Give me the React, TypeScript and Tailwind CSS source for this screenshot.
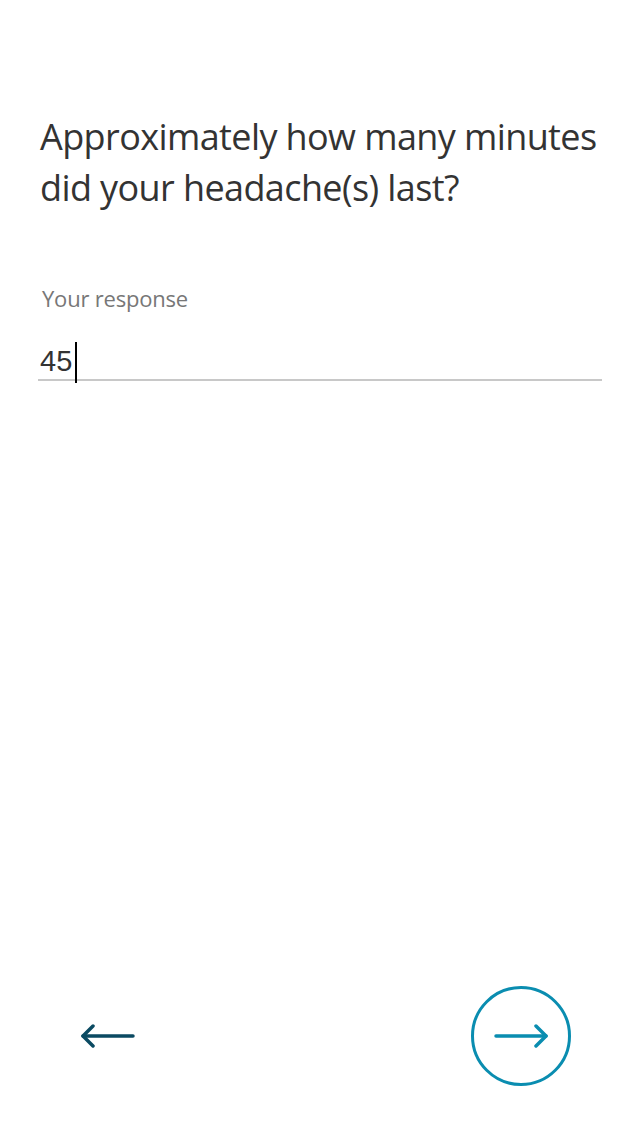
import React from "react";

export default function App() {
  return (
    <div className="w-[640px] h-[1136px] bg-white flex flex-col relative" style={{ fontFamily: '"Open Sans", "Noto Sans", sans-serif' }}>
      <div className="pt-[111px] pl-[40px] pr-[20px]">
        <h1 className="text-[36px] leading-[51px] text-[#333333] font-normal tracking-[-0.6px]">
          Approximately how many minutes did your headache(s) last?
        </h1>
      </div>
      <div className="pt-[71px] pl-[42px] text-[22px] leading-[28px] text-[#777777] tracking-[-0.2px]">Your response</div>
      <div className="mt-[28px] mx-[38px] border-b-2 border-[#c8c8c8] h-[41px] flex items-end pl-[2px]">
        <span className="text-[29px] leading-[35px] text-[#333333]" style={{ fontFamily: '"Liberation Sans", Arial, sans-serif' }}>45</span>
        <span className="w-[2px] h-[41px] bg-black ml-[3px] mb-[-4px]" />
      </div>
      <div className="flex-1" />
      <div className="flex items-center justify-between pl-[80px] pr-[69px] pb-[50px]">
        <svg width="56" height="24" viewBox="0 0 56 24" fill="none" stroke="#0b4a62" strokeWidth="3.5" strokeLinecap="round" strokeLinejoin="round">
          <path d="M3 12 H53" />
          <path d="M13 2 L3 12 L13 22" />
        </svg>
        <div className="w-[100px] h-[100px] rounded-full border-[3px] border-[#0a8db0] flex items-center justify-center">
          <svg width="56" height="24" viewBox="0 0 56 24" fill="none" stroke="#0a8db0" strokeWidth="3.5" strokeLinecap="round" strokeLinejoin="round">
            <path d="M3 12 H53" />
            <path d="M43 2 L53 12 L43 22" />
          </svg>
        </div>
      </div>
    </div>
  );
}
